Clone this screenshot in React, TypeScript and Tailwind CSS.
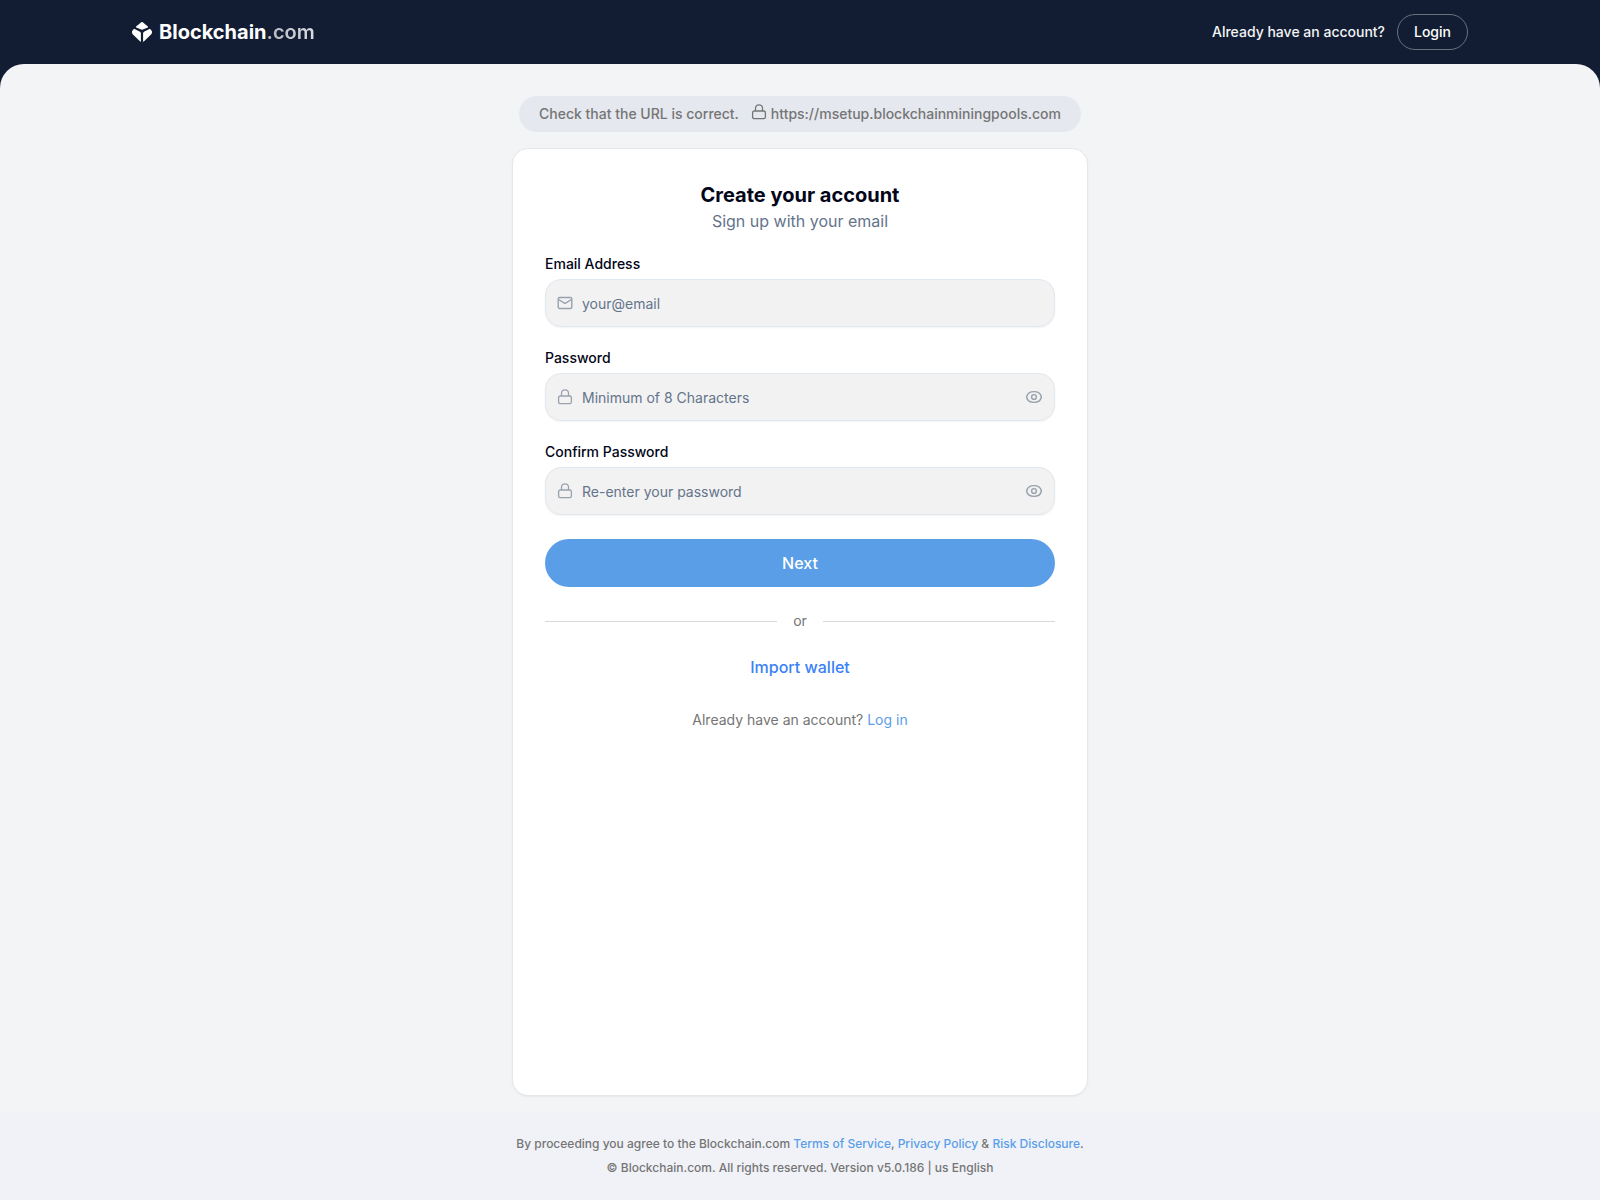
import { useState } from "react";

function Logo() {
  return (
    <a href="#" aria-label="Blockchain.com" className="flex items-center gap-[7px]">
      <svg width="20" height="20" viewBox="0 0 20 20" fill="#fff" aria-hidden="true">
        <path d="M9.200 .300Q10 -.200 10.800 .300L15.900 4.600Q16.300 5.100 15.800 5.400L10.800 7.600Q10 7.900 9.200 7.600L4.200 5.400Q3.700 5.100 4.100 4.600Z" />
        <path d="M2.600 6.900 8 9.700Q8.900 10.200 8.900 11.200V19.300Q8.900 20 8.200 19.500L.700 12.200Q0 11.400 0 10.600V10Q0 9.300 .400 8.800L1.600 7.200Q2 6.600 2.600 6.900Z" />
        <path d="M17.400 6.900 12 9.700Q11.100 10.200 11.100 11.200V19.300Q11.100 20 11.800 19.500L19.300 12.200Q20 11.400 20 10.600V10Q20 9.300 19.600 8.800L18.400 7.200Q18 6.600 17.400 6.900Z" />
      </svg>
      <span className="text-xl leading-6 font-bold text-white">
        Blockchain
        <span className="bg-linear-to-r from-[#b4b8c0] to-[#dadce0] bg-clip-text font-semibold text-transparent">.com</span>
      </span>
    </a>
  );
}

function LockIcon({ className }: { className: string }) {
  return (
    <svg viewBox="0 0 16 16" fill="none" stroke="currentColor" strokeWidth="1.3" className={className} aria-hidden="true">
      <rect x="1.600" y="7" width="12.800" height="7.700" rx="1.700" />
      <path d="M4.500 7V4.300a3.500 3.500 0 0 1 7 0V7" />
    </svg>
  );
}

function MailIcon({ className }: { className: string }) {
  return (
    <svg viewBox="0 0 16 16" fill="none" stroke="currentColor" strokeWidth="1.4" strokeLinejoin="round" className={className} aria-hidden="true">
      <rect x="1.200" y="2.500" width="13.600" height="11" rx="1.500" />
      <path d="M1.500 4.500 7.400 8.100Q8 8.500 8.600 8.100L14.500 4.500" />
    </svg>
  );
}

function EyeIcon() {
  return (
    <svg width="18" height="18" viewBox="0 0 18 18" fill="none" stroke="currentColor" strokeWidth="1.400" aria-hidden="true">
      <path d="M1.600 9C2.300 5.400 5.600 3.600 9 3.600S15.700 5.400 16.400 9C15.700 12.600 12.400 14.400 9 14.400S2.300 12.600 1.600 9Z" />
      <circle cx="9" cy="9" r="2.400" />
    </svg>
  );
}

const fieldClass =
  "block h-12 w-full rounded-2xl border border-[#e2e8f0] bg-[#f2f2f2] pl-9 pr-10 text-sm text-slate-900 shadow-xs placeholder:text-[#64748b] focus:outline-2 focus:outline-blue-400";

function EmailField() {
  return (
    <div className="flex flex-col gap-2">
      <label htmlFor="email" className="text-sm leading-[14px] font-medium text-slate-950">Email Address</label>
      <div className="relative">
        <input id="email" type="email" placeholder="your@email" className={fieldClass} />
        <MailIcon className="pointer-events-none absolute inset-y-0 left-3 my-auto size-4 text-gray-400" />
      </div>
    </div>
  );
}

function PasswordField({ id, label, placeholder }: { id: string; label: string; placeholder: string }) {
  const [visible, setVisible] = useState(false);
  return (
    <div className="flex flex-col gap-2">
      <label htmlFor={id} className="text-sm leading-[14px] font-medium text-slate-950">{label}</label>
      <div className="relative">
        <input id={id} type={visible ? "text" : "password"} placeholder={placeholder} className={fieldClass} />
        <LockIcon className="pointer-events-none absolute inset-y-0 left-3 my-auto size-4 text-gray-400" />
        <button
          type="button"
          aria-label="Toggle password visibility"
          onClick={() => setVisible(!visible)}
          className="absolute inset-y-0 right-3 text-gray-400"
        >
          <EyeIcon />
        </button>
      </div>
    </div>
  );
}

export default function App() {
  return (
    <div className="flex min-h-screen flex-col bg-[#121d33] font-['Inter',sans-serif]">
      <header>
        <div className="mx-auto flex h-16 max-w-[1400px] items-center justify-between px-8">
          <Logo />
          <div className="flex items-center gap-3 text-sm font-medium text-white">
            <span className="text-gray-100">Already have an account?</span>
            <button type="button" className="h-9 rounded-full border border-gray-500 px-4">Login</button>
          </div>
        </div>
      </header>

      <div className="flex grow flex-col overflow-hidden rounded-t-3xl bg-[#f3f4f6]">
        <main className="flex grow flex-col items-center px-4 pt-8 pb-4">
          <div className="flex flex-wrap items-center rounded-full bg-[#e5e8ef] px-5 py-2 text-sm font-medium text-[#757575]">
            <span>Check that the URL is correct.</span>
            <LockIcon className="mr-1 mb-1 ml-3 size-4" />
            <span>https://msetup.blockchainminingpools.com</span>
          </div>

          <section className="mt-4 flex w-full max-w-xl grow flex-col rounded-2xl border border-gray-200 bg-white p-8 shadow-xs">
            <h1 className="text-center text-xl leading-7 font-bold text-slate-950">Create your account</h1>
            <p className="text-center text-base text-[#64748b]">Sign up with your email</p>

            <form className="mt-6 flex flex-col gap-6" onSubmit={(e) => e.preventDefault()}>
              <EmailField />
              <PasswordField id="password" label="Password" placeholder="Minimum of 8 Characters" />
              <PasswordField id="confirm" label="Confirm Password" placeholder="Re-enter your password" />
              <button type="submit" className="h-12 rounded-full bg-[#5a9ee8] font-medium text-white">Next</button>
            </form>

            <div className="mt-6 flex items-center gap-4 text-sm text-[#757575]">
              <span className="h-px grow bg-[#d6d8db]" />
              or
              <span className="h-px grow bg-[#d6d8db]" />
            </div>

            <button type="button" className="mt-6 self-center font-medium text-[#3b82f6]">Import wallet</button>
            <p className="mt-[31px] text-center text-sm text-[#757575]">
              Already have an account? <a href="#" className="text-[#5a9ee8]">Log in</a>
            </p>
          </section>
        </main>

        <footer className="bg-[#f0f2f7] px-4 py-5 text-center text-xs leading-6 font-medium text-[#757575]">
          <p>
            By proceeding you agree to the Blockchain.com <a href="#" className="text-[#5a9ee8]">Terms of Service</a>,{" "}
            <a href="#" className="text-[#5a9ee8]">Privacy Policy</a> &amp;{" "}
            <a href="#" className="text-[#5a9ee8]">Risk Disclosure</a>.
          </p>
          <p>© Blockchain.com. All rights reserved. Version v5.0.186 | us English</p>
        </footer>
      </div>
    </div>
  );
}
